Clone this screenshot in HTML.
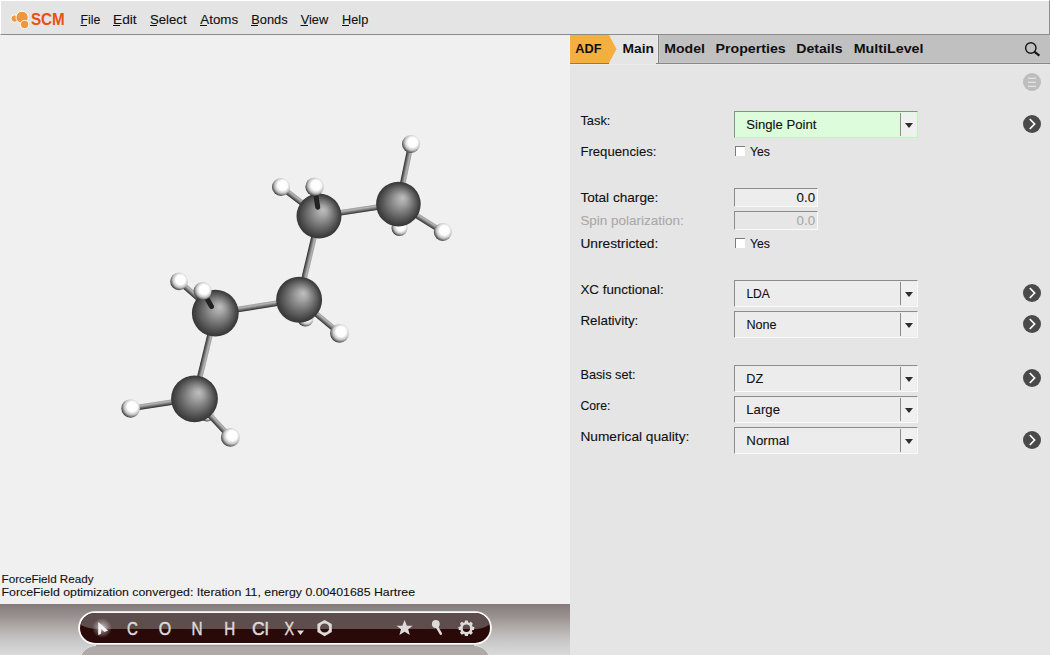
<!DOCTYPE html>
<html><head><meta charset="utf-8"><title>AMSinput</title>
<style>
*{box-sizing:border-box;margin:0;padding:0}
html,body{width:1050px;height:655px;overflow:hidden}
body{position:relative;background:#e5e5e5;font-family:"Liberation Sans",sans-serif}
.a{position:absolute}
#menubar{left:0;top:0;width:1050px;height:35px;background:#e4e4e4;border-top:1px solid #fff;border-left:1px solid #fff;border-right:1px solid #8c8c8c;border-bottom:1px solid #8c8c8c}
#view{left:0;top:35px;width:570px;height:569px;background:#f0f0f0}
#tools{left:0;top:604px;width:570px;height:51px;background:linear-gradient(#847a7a 0%,#9a9292 25%,#b5b0ae 50%,#cbcaca 75%,#d9d9d9 100%)}
#panel{left:570px;top:35px;width:480px;height:620px;background:#e5e5e5}
#tabbar{left:658px;top:35px;width:392px;height:28px;background:#c0c0c0;border-left:1px solid #858585;box-shadow:inset 1px -1px 0 #c8c8c8}
.combo{position:absolute;left:734px;width:184px;height:27px;background:#ececec;border-top:1px solid #8c8c8c;border-left:1px solid #8c8c8c;border-right:1px solid #fafafa;border-bottom:1px solid #fafafa}
.combo .btn{position:absolute;left:165px;top:1px;width:16px;height:23px;background:#f0f0f0;border-left:1px solid #8c8c8c}
.combo .tri{position:absolute;left:4px;top:10px;width:0;height:0;border-left:4px solid transparent;border-right:4px solid transparent;border-top:5.5px solid #2e2e2e}
.combo.g{background:#dcfcdc;border-top-color:#7c987c;border-left-color:#7c987c;border-right-color:#c8eec8;border-bottom-color:#c8eec8}
.inp{position:absolute;left:734px;width:84px;height:19px;background:#ededed;border-top:1px solid #8c8c8c;border-left:1px solid #8c8c8c;border-right:1px solid #fafafa;border-bottom:1px solid #fafafa}
.inp.d{background:#e6e6e6}
.cb{position:absolute;left:735px;width:10px;height:10px;background:#fff;border-top:1px solid #7c7c7c;border-left:1px solid #7c7c7c}
svg{position:absolute;left:0;top:0}
</style></head>
<body>
<div id="menubar" class="a"></div>
<div id="view" class="a"></div>
<div id="tools" class="a"></div>
<div id="panel" class="a"></div>
<div id="tabbar" class="a"></div>
<div class="a" style="left:656px;top:63px;width:394px;height:1px;background:#858585"></div>
<div class="a" style="left:570px;top:64px;width:480px;height:1px;background:#ebebeb"></div>
<div class="a" style="left:657px;top:35px;width:1px;height:28px;background:#ececec"></div>
<div class="a" style="left:569px;top:35px;width:1px;height:29px;background:#f2f4fa"></div>

<div class="combo g" style="top:111px"><div class="btn"><div class="tri"></div></div></div>
<div class="combo" style="top:280px"><div class="btn"><div class="tri"></div></div></div>
<div class="combo" style="top:311px"><div class="btn"><div class="tri"></div></div></div>
<div class="combo" style="top:365px"><div class="btn"><div class="tri"></div></div></div>
<div class="combo" style="top:396px"><div class="btn"><div class="tri"></div></div></div>
<div class="combo" style="top:427px"><div class="btn"><div class="tri"></div></div></div>
<div class="inp" style="top:188px"></div>
<div class="inp d" style="top:211px"></div>
<div class="cb" style="top:146px"></div>
<div class="cb" style="top:238px"></div>

<svg width="1050" height="655" viewBox="0 0 1050 655" style="font-family:'Liberation Sans',sans-serif">
<defs>
<radialGradient id="cg" cx="0.5" cy="0.5" r="0.5" fx="0.6" fy="0.36">
<stop offset="0" stop-color="#bebebe"/><stop offset="0.22" stop-color="#a6a6a6"/><stop offset="0.6" stop-color="#6e6e6e"/><stop offset="0.9" stop-color="#424242"/><stop offset="1" stop-color="#363636"/>
</radialGradient>
<radialGradient id="hg" cx="0.58" cy="0.42" r="0.6" fx="0.6" fy="0.4">
<stop offset="0" stop-color="#ffffff"/><stop offset="0.45" stop-color="#fdfdfd"/><stop offset="0.72" stop-color="#c4c4c4"/><stop offset="0.9" stop-color="#707070"/><stop offset="1" stop-color="#353535"/>
</radialGradient>
<linearGradient id="bg" x1="0" y1="0" x2="0" y2="1">
<stop offset="0" stop-color="#9c9c9c"/><stop offset="0.28" stop-color="#b4b4b4"/><stop offset="0.6" stop-color="#7a7a7a"/><stop offset="1" stop-color="#2a2a2a"/>
</linearGradient>
<linearGradient id="bgf" x1="0" y1="1" x2="0" y2="0">
<stop offset="0" stop-color="#9c9c9c"/><stop offset="0.28" stop-color="#b4b4b4"/><stop offset="0.6" stop-color="#7a7a7a"/><stop offset="1" stop-color="#2a2a2a"/>
</linearGradient>
<linearGradient id="fb" gradientUnits="userSpaceOnUse" x1="0" y1="0" x2="1050" y2="0"><stop offset="0" stop-color="#222"/><stop offset="1" stop-color="#222"/></linearGradient>
<linearGradient id="pillTop" x1="0" y1="0" x2="0" y2="1">
<stop offset="0" stop-color="#665656"/><stop offset="1" stop-color="#5a4a4a"/>
</linearGradient>
<radialGradient id="glow" cx="0.5" cy="0.5" r="0.5">
<stop offset="0" stop-color="#fff" stop-opacity="0.8"/><stop offset="0.45" stop-color="#fff" stop-opacity="0.35"/><stop offset="1" stop-color="#fff" stop-opacity="0"/>
</radialGradient>
</defs>

<!-- SCM logo -->
<g stroke="#fff" stroke-width="0.9">
<circle cx="14.7" cy="18.6" r="3.7" fill="#f0963c"/>
<circle cx="22.1" cy="17.3" r="6.1" fill="#f0963c"/>
<circle cx="24.6" cy="24.5" r="4.1" fill="#f0963c"/>
</g>
<!-- ADF tab -->
<polygon points="570,35 609,35 616.5,49 609,63 570,63" fill="#f5ae40"/>
<line x1="570" y1="63.5" x2="609" y2="63.5" stroke="#7a7e84" stroke-width="1"/>

<!-- search icon -->
<circle cx="1030.8" cy="48" r="5.2" fill="none" stroke="#161616" stroke-width="1.4"/>
<line x1="1034.6" y1="51.8" x2="1039.4" y2="55.6" stroke="#161616" stroke-width="2.2"/>

<!-- hamburger -->
<circle cx="1032" cy="82" r="9" fill="#bdbdbd"/>
<g stroke="#e6e6e6" stroke-width="1.2">
<line x1="1028" y1="78.3" x2="1036" y2="78.3"/><line x1="1028" y1="82.3" x2="1036" y2="82.3"/><line x1="1028" y1="86.3" x2="1036" y2="86.3"/>
</g>
<!-- arrow circles -->
<g id="arr">
<circle cx="1032" cy="124" r="9" fill="#4a4a4a"/><polyline points="1029.8,119.0 1034.6,124.0 1029.8,129.0" fill="none" stroke="#fff" stroke-width="1.7"/>
<circle cx="1032" cy="293" r="9" fill="#4a4a4a"/><polyline points="1029.8,288.0 1034.6,293.0 1029.8,298.0" fill="none" stroke="#fff" stroke-width="1.7"/>
<circle cx="1032" cy="324" r="9" fill="#4a4a4a"/><polyline points="1029.8,319.0 1034.6,324.0 1029.8,329.0" fill="none" stroke="#fff" stroke-width="1.7"/>
<circle cx="1032" cy="378" r="9" fill="#4a4a4a"/><polyline points="1029.8,373.0 1034.6,378.0 1029.8,383.0" fill="none" stroke="#fff" stroke-width="1.7"/>
<circle cx="1032" cy="440" r="9" fill="#4a4a4a"/><polyline points="1029.8,435.0 1034.6,440.0 1029.8,445.0" fill="none" stroke="#fff" stroke-width="1.7"/>
</g>

<!-- menu underlines -->
<g stroke="#101010" stroke-width="1">
<line x1="80.5" y1="25.5" x2="87" y2="25.5"/>
<line x1="113" y1="25.5" x2="120" y2="25.5"/>
<line x1="150" y1="25.5" x2="157" y2="25.5"/>
<line x1="200" y1="25.5" x2="207" y2="25.5"/>
<line x1="251" y1="25.5" x2="258" y2="25.5"/>
<line x1="300.5" y1="25.5" x2="308" y2="25.5"/>
<line x1="342" y1="25.5" x2="349" y2="25.5"/>
</g>

<!-- molecule -->
<rect x="0" y="-2.8" width="23.93" height="5.6" fill="url(#bg)" transform="translate(398.40,204.10) rotate(87.36)"/>
<rect x="0" y="-2.8" width="19.86" height="5.6" fill="url(#bg)" transform="translate(299.10,299.70) rotate(71.20)"/>
<rect x="0" y="-2.8" width="19.68" height="5.6" fill="url(#bg)" transform="translate(194.50,398.80) rotate(50.57)"/>
<circle cx="399.5" cy="228" r="8" fill="url(#hg)"/>
<circle cx="305.5" cy="318.5" r="8" fill="url(#hg)"/>
<circle cx="207" cy="414" r="7.5" fill="url(#hg)"/>
<rect x="0" y="-2.8" width="80.29" height="5.6" fill="url(#bgf)" transform="translate(398.40,204.10) rotate(171.48)"/>
<rect x="0" y="-2.8" width="86.03" height="5.6" fill="url(#bg)" transform="translate(319.00,216.00) rotate(103.37)"/>
<rect x="0" y="-2.8" width="84.86" height="5.6" fill="url(#bgf)" transform="translate(299.10,299.70) rotate(170.92)"/>
<rect x="0" y="-2.8" width="88.19" height="5.6" fill="url(#bg)" transform="translate(215.30,313.10) rotate(103.64)"/>
<rect x="0" y="-2.8" width="61.41" height="5.6" fill="url(#bgf)" transform="translate(398.40,204.10) rotate(-78.16)"/>
<rect x="0" y="-2.8" width="52.44" height="5.6" fill="url(#bg)" transform="translate(398.40,204.10) rotate(32.14)"/>
<rect x="0" y="-2.8" width="47.80" height="5.6" fill="url(#bgf)" transform="translate(319.00,216.00) rotate(-142.65)"/>
<rect x="0" y="-2.8" width="52.55" height="5.6" fill="url(#bg)" transform="translate(299.10,299.70) rotate(39.75)"/>
<rect x="0" y="-2.8" width="48.19" height="5.6" fill="url(#bgf)" transform="translate(215.30,313.10) rotate(-138.87)"/>
<rect x="0" y="-2.8" width="64.62" height="5.6" fill="url(#bgf)" transform="translate(194.50,398.80) rotate(171.46)"/>
<rect x="0" y="-2.8" width="52.71" height="5.6" fill="url(#bg)" transform="translate(194.50,398.80) rotate(47.08)"/>
<circle cx="281" cy="187" r="9" fill="url(#hg)"/>
<circle cx="179" cy="281.4" r="8.8" fill="url(#hg)"/>
<circle cx="398.4" cy="204.1" r="22.3" fill="url(#cg)"/>
<circle cx="319" cy="216" r="22.5" fill="url(#cg)"/>
<circle cx="299.1" cy="299.7" r="23" fill="url(#cg)"/>
<circle cx="215.3" cy="313.1" r="23.4" fill="url(#cg)"/>
<circle cx="194.5" cy="398.8" r="23.4" fill="url(#cg)"/>
<line x1="202.6" y1="291.1" x2="211.49" y2="306.50" stroke="url(#fb)" stroke-width="5" stroke-linecap="round"/>
<line x1="314.6" y1="186.8" x2="317.68" y2="207.24" stroke="url(#fb)" stroke-width="5" stroke-linecap="round"/>
<circle cx="411" cy="144" r="9" fill="url(#hg)"/>
<circle cx="442.8" cy="232" r="9" fill="url(#hg)"/>
<circle cx="314.6" cy="186.8" r="9.2" fill="url(#hg)"/>
<circle cx="339.5" cy="333.3" r="9.4" fill="url(#hg)"/>
<circle cx="202.6" cy="291.1" r="9" fill="url(#hg)"/>
<circle cx="130.6" cy="408.4" r="9.25" fill="url(#hg)"/>
<circle cx="230.4" cy="437.4" r="9.4" fill="url(#hg)"/>

<!-- toolbar pill -->
<g>
<rect x="79.5" y="645.5" width="411" height="33" rx="16.5" fill="#aeaaaa" stroke="#e2e0e0" stroke-width="1"/>
<rect x="96" y="644.5" width="378" height="2" fill="#a09c9c"/>
<rect x="78.2" y="611.2" width="413.6" height="33.4" rx="16.7" fill="#fff"/>
<rect x="80" y="613" width="410" height="30" rx="15" fill="#2a0909"/>
<path d="M95,613 H475 A15,15 0 0 1 489.6,624 C486,627.5 481,629 474,629 H100 C93,629 87,628 80.6,625 A15,15 0 0 1 95,613 Z" fill="#5e4d4d"/>
</g>
<g fill="#f4f2f2">
<circle cx="102" cy="628" r="10" fill="url(#glow)"/>
<path d="M98.2,621.9 L108,630.4 L104.4,631.9 L101.3,628.8 L100.9,634 L98.2,634.9 Z"/>
</g>

<polygon points="297,630.5 304,630.5 300.5,635" fill="#e2dede"/>
<path fill="#dedada" fill-rule="evenodd" d="M324.6,619.9 L331.8,624 L331.8,632.1 L324.6,636.2 L317.4,632.1 L317.4,624 Z M324.6,623.4 A4.6,4.6 0 1 0 324.6,632.6 A4.6,4.6 0 1 0 324.6,623.4 Z"/>
<polygon points="404.6,620.1 406.9,625.7 412.7,625.7 408.2,629.3 409.8,635.1 404.6,631.7 399.4,635.1 401,629.3 396.5,625.7 402.3,625.7" fill="#dedada"/>
<circle cx="435.8" cy="624" r="3.9" fill="#dedada"/>
<line x1="436.4" y1="626" x2="440.8" y2="633.6" stroke="#dedada" stroke-width="2.5" stroke-linecap="round"/>
<g transform="translate(466.4,628.3)" fill="#dedada">
<path fill-rule="evenodd" d="M0,-6.3 A6.3,6.3 0 1 1 0,6.3 A6.3,6.3 0 1 1 0,-6.3 Z M0,-3.7 A3.7,3.7 0 1 0 0,3.7 A3.7,3.7 0 1 0 0,-3.7 Z"/>
<g id="teeth"><rect x="-1.6" y="-7.8" width="3.2" height="2.6" rx="0.6"/></g>
<use href="#teeth" transform="rotate(45)"/><use href="#teeth" transform="rotate(90)"/><use href="#teeth" transform="rotate(135)"/><use href="#teeth" transform="rotate(180)"/><use href="#teeth" transform="rotate(225)"/><use href="#teeth" transform="rotate(270)"/><use href="#teeth" transform="rotate(315)"/>
</g>
<!-- texts -->
<text x="80.40" y="23.80" font-size="13" font-weight="normal" fill="#101010" stroke="#101010" stroke-width="0.1" textLength="19.84" lengthAdjust="spacingAndGlyphs" >File</text>
<text x="113.00" y="23.80" font-size="13" font-weight="normal" fill="#101010" stroke="#101010" stroke-width="0.1" textLength="23.60" lengthAdjust="spacingAndGlyphs" >Edit</text>
<text x="150.00" y="23.80" font-size="13" font-weight="normal" fill="#101010" stroke="#101010" stroke-width="0.1" textLength="36.63" lengthAdjust="spacingAndGlyphs" >Select</text>
<text x="200.30" y="23.80" font-size="13" font-weight="normal" fill="#101010" stroke="#101010" stroke-width="0.1" textLength="37.74" lengthAdjust="spacingAndGlyphs" >Atoms</text>
<text x="251.20" y="23.80" font-size="13" font-weight="normal" fill="#101010" stroke="#101010" stroke-width="0.1" textLength="36.46" lengthAdjust="spacingAndGlyphs" >Bonds</text>
<text x="300.70" y="23.80" font-size="13" font-weight="normal" fill="#101010" stroke="#101010" stroke-width="0.1" textLength="27.54" lengthAdjust="spacingAndGlyphs" >View</text>
<text x="342.00" y="23.80" font-size="13" font-weight="normal" fill="#101010" stroke="#101010" stroke-width="0.1" textLength="26.23" lengthAdjust="spacingAndGlyphs" >Help</text>
<text x="30.90" y="25.40" font-size="16" font-weight="bold" fill="#e8520c" textLength="33.86" lengthAdjust="spacingAndGlyphs" >SCM</text>
<text x="575.30" y="52.90" font-size="12.5" font-weight="bold" fill="#101010" textLength="26.19" lengthAdjust="spacingAndGlyphs" >ADF</text>
<text x="622.60" y="52.90" font-size="12.5" font-weight="bold" fill="#101010" textLength="31.37" lengthAdjust="spacingAndGlyphs" >Main</text>
<text x="664.30" y="52.90" font-size="12.5" font-weight="bold" fill="#101010" textLength="40.61" lengthAdjust="spacingAndGlyphs" >Model</text>
<text x="715.50" y="52.90" font-size="12.5" font-weight="bold" fill="#101010" textLength="70.23" lengthAdjust="spacingAndGlyphs" >Properties</text>
<text x="796.30" y="52.90" font-size="12.5" font-weight="bold" fill="#101010" textLength="46.19" lengthAdjust="spacingAndGlyphs" >Details</text>
<text x="853.70" y="52.90" font-size="12.5" font-weight="bold" fill="#101010" textLength="69.82" lengthAdjust="spacingAndGlyphs" >MultiLevel</text>
<text x="580.40" y="125.00" font-size="13" font-weight="normal" fill="#101010" stroke="#101010" stroke-width="0.1" textLength="30.04" lengthAdjust="spacingAndGlyphs" >Task:</text>
<text x="580.40" y="156.00" font-size="13" font-weight="normal" fill="#101010" stroke="#101010" stroke-width="0.1" textLength="76.05" lengthAdjust="spacingAndGlyphs" >Frequencies:</text>
<text x="580.40" y="202.00" font-size="13" font-weight="normal" fill="#101010" stroke="#101010" stroke-width="0.1" textLength="77.93" lengthAdjust="spacingAndGlyphs" >Total charge:</text>
<text x="580.40" y="225.00" font-size="13" font-weight="normal" fill="#a9a9a9" stroke="#a9a9a9" stroke-width="0.1" textLength="103.23" lengthAdjust="spacingAndGlyphs" >Spin polarization:</text>
<text x="580.40" y="248.00" font-size="13" font-weight="normal" fill="#101010" stroke="#101010" stroke-width="0.1" textLength="77.89" lengthAdjust="spacingAndGlyphs" >Unrestricted:</text>
<text x="580.40" y="294.00" font-size="13" font-weight="normal" fill="#101010" stroke="#101010" stroke-width="0.1" textLength="83.23" lengthAdjust="spacingAndGlyphs" >XC functional:</text>
<text x="580.40" y="325.00" font-size="13" font-weight="normal" fill="#101010" stroke="#101010" stroke-width="0.1" textLength="57.95" lengthAdjust="spacingAndGlyphs" >Relativity:</text>
<text x="580.40" y="379.00" font-size="13" font-weight="normal" fill="#101010" stroke="#101010" stroke-width="0.1" textLength="55.26" lengthAdjust="spacingAndGlyphs" >Basis set:</text>
<text x="580.40" y="410.00" font-size="13" font-weight="normal" fill="#101010" stroke="#101010" stroke-width="0.1" textLength="29.99" lengthAdjust="spacingAndGlyphs" >Core:</text>
<text x="580.40" y="441.00" font-size="13" font-weight="normal" fill="#101010" stroke="#101010" stroke-width="0.1" textLength="108.91" lengthAdjust="spacingAndGlyphs" >Numerical quality:</text>
<text x="746.20" y="129.00" font-size="13" font-weight="normal" fill="#101010" stroke="#101010" stroke-width="0.1" textLength="70.18" lengthAdjust="spacingAndGlyphs" >Single Point</text>
<text x="746.40" y="298.00" font-size="13" font-weight="normal" fill="#101010" stroke="#101010" stroke-width="0.1" textLength="23.49" lengthAdjust="spacingAndGlyphs" >LDA</text>
<text x="746.40" y="329.00" font-size="13" font-weight="normal" fill="#101010" stroke="#101010" stroke-width="0.1" textLength="30.18" lengthAdjust="spacingAndGlyphs" >None</text>
<text x="746.30" y="383.00" font-size="13" font-weight="normal" fill="#101010" stroke="#101010" stroke-width="0.1" textLength="16.83" lengthAdjust="spacingAndGlyphs" >DZ</text>
<text x="746.30" y="414.20" font-size="13" font-weight="normal" fill="#101010" stroke="#101010" stroke-width="0.1" textLength="33.65" lengthAdjust="spacingAndGlyphs" >Large</text>
<text x="746.30" y="444.70" font-size="13" font-weight="normal" fill="#101010" stroke="#101010" stroke-width="0.1" textLength="42.79" lengthAdjust="spacingAndGlyphs" >Normal</text>
<text x="750.00" y="156.00" font-size="13" font-weight="normal" fill="#101010" stroke="#101010" stroke-width="0.1" textLength="20.01" lengthAdjust="spacingAndGlyphs" >Yes</text>
<text x="750.00" y="248.00" font-size="13" font-weight="normal" fill="#101010" stroke="#101010" stroke-width="0.1" textLength="20.01" lengthAdjust="spacingAndGlyphs" >Yes</text>
<text x="796.60" y="202.00" font-size="13" font-weight="normal" fill="#101010" stroke="#101010" stroke-width="0.1" textLength="18.47" lengthAdjust="spacingAndGlyphs" >0.0</text>
<text x="796.60" y="225.00" font-size="13" font-weight="normal" fill="#a9a9a9" stroke="#a9a9a9" stroke-width="0.1" textLength="18.47" lengthAdjust="spacingAndGlyphs" >0.0</text>
<text x="1.60" y="583.30" font-size="11.5" font-weight="normal" fill="#101010" stroke="#101010" stroke-width="0.1" textLength="91.96" lengthAdjust="spacingAndGlyphs" >ForceField Ready</text>
<text x="1.60" y="596.00" font-size="11.5" font-weight="normal" fill="#101010" stroke="#101010" stroke-width="0.1" textLength="413.39" lengthAdjust="spacingAndGlyphs" >ForceField optimization converged: Iteration 11, energy 0.00401685 Hartree</text>
<text x="126.90" y="634.80" font-size="17.8" font-weight="normal" fill="#dedada" stroke="#dedada" stroke-width="0.45" textLength="10.86" lengthAdjust="spacingAndGlyphs" >C</text>
<text x="158.80" y="634.80" font-size="17.8" font-weight="normal" fill="#dedada" stroke="#dedada" stroke-width="0.45" textLength="12.44" lengthAdjust="spacingAndGlyphs" >O</text>
<text x="191.60" y="634.80" font-size="17.8" font-weight="normal" fill="#dedada" stroke="#dedada" stroke-width="0.45" textLength="11.06" lengthAdjust="spacingAndGlyphs" >N</text>
<text x="224.20" y="634.80" font-size="17.8" font-weight="normal" fill="#dedada" stroke="#dedada" stroke-width="0.45" textLength="10.96" lengthAdjust="spacingAndGlyphs" >H</text>
<text x="252.00" y="634.80" font-size="17.8" font-weight="normal" fill="#dedada" stroke="#dedada" stroke-width="0.45" textLength="16.61" lengthAdjust="spacingAndGlyphs" >Cl</text>
<text x="284.40" y="634.80" font-size="17.8" font-weight="normal" fill="#dedada" stroke="#dedada" stroke-width="0.45" textLength="9.58" lengthAdjust="spacingAndGlyphs" >X</text>
</svg>
</body></html>
